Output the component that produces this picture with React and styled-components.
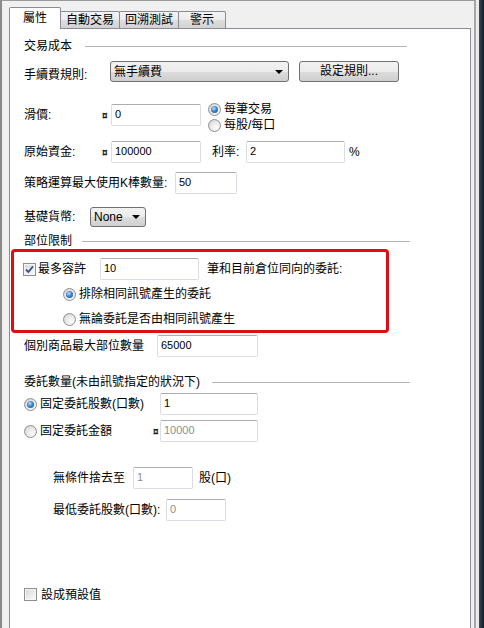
import styled, { createGlobalStyle } from "styled-components";

// 基本樣式
const GlobalStyle = createGlobalStyle`
  html, body {
    margin: 0;
    padding: 0;
    background: #f0f0f0;
    overflow: hidden;
  }
  body {
    font-family: "Liberation Sans", "Noto Sans CJK TC", sans-serif;
    font-size: 12px;
    line-height: 14px;
    color: #000;
  }
`;

const Frame = styled.div`
  display: flex;
  width: 484px;
  height: 628px;
  overflow: hidden;
  background: #f0f0f0;
`;

const Dialog = styled.div`
  display: flex;
  flex-direction: column;
  flex: none;
  width: 476px;
  box-sizing: border-box;
  border-top: 1px solid #9a9a9a;
  border-left: 2px solid #8a8a8a;
  border-right: 2px solid #a6a6a6;
  padding: 6px 3px 0 7px;
`;

const EdgeGap = styled.div`
  flex: none;
  width: 3px;
  background: #ececec;
`;

const Desktop = styled.div`
  flex: 1;
  background: linear-gradient(90deg, #3a4a5a, #0f1a24);
`;

const TabStrip = styled.div`
  display: flex;
  align-items: flex-end;
  height: 21px;
`;

const Tab = styled.div`
  position: relative;
  z-index: ${(p) => (p.$active ? 2 : 1)};
  box-sizing: border-box;
  width: ${(p) => p.$w}px;
  height: ${(p) => (p.$active ? 22 : 17)}px;
  margin-bottom: ${(p) => (p.$active ? -1 : 0)}px;
  margin-left: ${(p) => (p.$first ? 0 : -1)}px;
  border: 1px solid #898c95;
  border-bottom: none;
  border-radius: 2px 2px 0 0;
  background: ${(p) =>
    p.$active
      ? "#fff"
      : "linear-gradient(#f3f3f3 0%, #ebebeb 50%, #dedede 51%, #d2d2d2 100%)"};
  text-align: center;
  line-height: ${(p) => (p.$active ? 20 : 16)}px;
  white-space: nowrap;
`;

const Panel = styled.div`
  display: flex;
  flex-direction: column;
  flex: 1;
  width: 462px;
  box-sizing: border-box;
  background: #fff;
  border: 1px solid #898c95;
  border-bottom: none;
  padding: 0 0 0 14px;
`;

const SectionHeader = styled.div`
  display: flex;
  align-items: center;
  width: ${(p) => p.$end}px;
  height: 14px;
  margin-top: ${(p) => p.$mt}px;
  white-space: nowrap;

  & > span {
    flex: none;
    width: ${(p) => p.$tw}px;
  }

  &::after {
    content: "";
    flex: 1;
    border-top: 1px solid #b4b4b4;
  }
`;

const Row = styled.div`
  display: flex;
  align-items: ${(p) => p.$align || "center"};
  height: ${(p) => (p.$h ? `${p.$h}px` : "auto")};
  margin-top: ${(p) => p.$mt || 0}px;
  margin-left: ${(p) => p.$ml || 0}px;
`;

const Field = styled.div`
  display: flex;
  align-items: center;
  height: 22px;
  margin-top: ${(p) => p.$mt || 0}px;
`;

const Label = styled.span`
  flex: none;
  width: ${(p) => (p.$w ? `${p.$w}px` : "auto")};
  margin-left: ${(p) => p.$ml || 0}px;
  padding-top: ${(p) => p.$pt || 0}px;
  white-space: nowrap;
`;

const Currency = styled.span`
  flex: none;
  width: ${(p) => p.$w || 9}px;
  font-size: 10px;
  font-weight: bold;
  color: #222;
  padding-top: 1px;
`;

const TextBox = styled.input`
  flex: none;
  box-sizing: border-box;
  width: ${(p) => p.$w}px;
  height: 22px;
  margin: 0;
  padding: 0 3px 3px;
  border: 1px solid #dadde3;
  border-top-color: #abadb3;
  border-radius: 2px;
  background: #fff;
  font: 11px "Liberation Sans", sans-serif;
  color: ${(p) => (p.$dim ? "#8d8d8d" : "#000")};
  outline: none;
`;

const Combo = styled.div`
  flex: none;
  display: flex;
  align-items: center;
  justify-content: space-between;
  box-sizing: border-box;
  width: ${(p) => p.$w}px;
  height: ${(p) => p.$h || 21}px;
  padding: 0 5px 0 3px;
  border: 1px solid #707070;
  border-radius: 3px;
  background: linear-gradient(#f2f2f2 0%, #ebebeb 50%, #dddddd 51%, #cfcfcf 100%);
  white-space: nowrap;
`;

const Arrow = styled.span`
  width: 0;
  height: 0;
  border-left: 4px solid transparent;
  border-right: 4px solid transparent;
  border-top: 4px solid #000;
`;

const PushButton = styled.div`
  flex: none;
  box-sizing: border-box;
  width: ${(p) => p.$w}px;
  height: 21px;
  margin-left: ${(p) => p.$ml || 0}px;
  border: 1px solid #707070;
  border-radius: 3px;
  background: linear-gradient(#f2f2f2 0%, #ebebeb 50%, #dddddd 51%, #cfcfcf 100%);
  text-align: center;
  line-height: 19px;
`;

const RadioStack = styled.div`
  display: flex;
  flex-direction: column;
  margin-left: ${(p) => p.$ml || 0}px;
`;

const RadioOption = styled.div`
  display: flex;
  align-items: center;
  gap: 3px;
  width: ${(p) => (p.$w ? `${p.$w}px` : "auto")};
  height: 16px;
  flex: none;
  margin-top: ${(p) => p.$mt || 0}px;
  margin-left: ${(p) => p.$ml || 0}px;
  white-space: nowrap;
`;

const RadioDot = styled.span`
  flex: none;
  display: flex;
  align-items: center;
  justify-content: center;
  box-sizing: border-box;
  width: 13px;
  height: 13px;
  border-radius: 50%;
  border: 1px solid #8e8f8f;
  background: radial-gradient(circle at 65% 70%, #fbfbfb 0%, #e6e6e6 55%, #c9c9c9 100%);

  &::after {
    content: "";
    display: ${(p) => (p.$on ? "block" : "none")};
    width: 7px;
    height: 7px;
    border-radius: 50%;
    background: radial-gradient(circle at 40% 35%, #bfe3ff 0%, #3b86cf 45%, #174e8c 100%);
  }
`;

const CheckBox = styled.span`
  flex: none;
  display: flex;
  align-items: center;
  justify-content: center;
  box-sizing: border-box;
  width: 13px;
  height: 13px;
  border: 1px solid #8e8f8f;
  background: linear-gradient(135deg, #d3d6da 0%, #eeeeee 60%, #fafafa 100%);
  box-shadow: inset 0 0 0 1px #f6f6f6;
`;

const Highlight = styled.div`
  display: flex;
  flex-direction: column;
  width: 378px;
  box-sizing: border-box;
  margin: 1px 0 0 -13px;
  padding: 6px 0 3px 9px;
  border: 3px solid #e00d12;
  border-radius: 4px;
`;

const Radio = ({ on, children, ...rest }) => (
  <RadioOption {...rest}>
    <RadioDot $on={on} />
    <span>{children}</span>
  </RadioOption>
);

const Check = ({ on }) => (
  <CheckBox>
    {on && (
      <svg width="9" height="9" viewBox="0 0 9 9">
        <path d="M1 4.6 L3.4 7 L8 1.4" fill="none" stroke="#3b4f86" strokeWidth="1.8" />
      </svg>
    )}
  </CheckBox>
);

const App = () => {
  return (
    <>
      <GlobalStyle />
      <Frame>
        <Dialog>
          <TabStrip>
            <Tab $active $first $w={52}>屬性</Tab>
            <Tab $w={60}>自動交易</Tab>
            <Tab $w={60}>回溯測試</Tab>
            <Tab $w={48}>警示</Tab>
          </TabStrip>
          <Panel>
            <SectionHeader $mt={10} $tw={61} $end={383}>
              <span>交易成本</span>
            </SectionHeader>

            <Row $mt={8} $h={21}>
              <Label $w={86} $pt={6}>手續費規則:</Label>
              <Combo $w={179}>
                <span>無手續費</span>
                <Arrow />
              </Combo>
              <PushButton $w={100} $ml={10}>設定規則...</PushButton>
            </Row>

            <Row $mt={19} $align="flex-start">
              <Field $mt={3}>
                <Label $w={78}>滑價:</Label>
                <Currency>¤</Currency>
                <TextBox $w={90} defaultValue="0" readOnly />
              </Field>
              <RadioStack $ml={7}>
                <Radio on>每筆交易</Radio>
                <Radio>每股/每口</Radio>
              </RadioStack>
            </Row>

            <Row $mt={8} $h={22}>
              <Label $w={78}>原始資金:</Label>
              <Currency>¤</Currency>
              <TextBox $w={90} defaultValue="100000" readOnly />
              <Label $w={34} $ml={11}>利率:</Label>
              <TextBox $w={99} defaultValue="2" readOnly />
              <Label $ml={4}>%</Label>
            </Row>

            <Row $mt={9} $h={22}>
              <Label $w={151}>策略運算最大使用K棒數量:</Label>
              <TextBox $w={62} defaultValue="50" readOnly />
            </Row>

            <Row $mt={13} $h={20}>
              <Label $w={66}>基礎貨幣:</Label>
              <Combo $w={56} $h={20}>
                <span>None</span>
                <Arrow />
              </Combo>
            </Row>

            <SectionHeader $mt={7} $tw={58} $end={386}>
              <span>部位限制</span>
            </SectionHeader>

            <Highlight>
              <Row $h={22}>
                <Check on />
                <Label $w={62} $ml={2}>最多容許</Label>
                <TextBox $w={99} defaultValue="10" readOnly />
                <Label $ml={8}>筆和目前倉位同向的委託:</Label>
              </Row>
              <Radio on $ml={40} $mt={6}>排除相同訊號產生的委託</Radio>
              <Radio $ml={40} $mt={9}>無論委託是否由相同訊號產生</Radio>
            </Highlight>

            <Row $mt={2} $h={22}>
              <Label $w={133}>個別商品最大部位數量</Label>
              <TextBox $w={101} defaultValue="65000" readOnly />
            </Row>

            <SectionHeader $mt={18} $tw={188} $end={386}>
              <span>委託數量(未由訊號指定的狀況下)</span>
            </SectionHeader>

            <Row $mt={4} $h={22}>
              <Radio on $w={136}>固定委託股數(口數)</Radio>
              <TextBox $w={98} defaultValue="1" readOnly />
            </Row>

            <Row $mt={5} $h={22}>
              <Radio $w={129}>固定委託金額</Radio>
              <Currency $w={7}>¤</Currency>
              <TextBox $w={98} $dim defaultValue="10000" readOnly />
            </Row>

            <Row $mt={25} $h={22} $ml={29}>
              <Label $w={80}>無條件捨去至</Label>
              <TextBox $w={60} $dim defaultValue="1" readOnly />
              <Label $ml={6}>股(口)</Label>
            </Row>

            <Row $mt={10} $h={22} $ml={29}>
              <Label $w={113}>最低委託股數(口數):</Label>
              <TextBox $w={60} $dim defaultValue="0" readOnly />
            </Row>

            <Row $mt={67} $h={13}>
              <Check />
              <Label $ml={4}>設成預設值</Label>
            </Row>
          </Panel>
        </Dialog>
        <EdgeGap />
        <Desktop />
      </Frame>
    </>
  );
};

export default App;
